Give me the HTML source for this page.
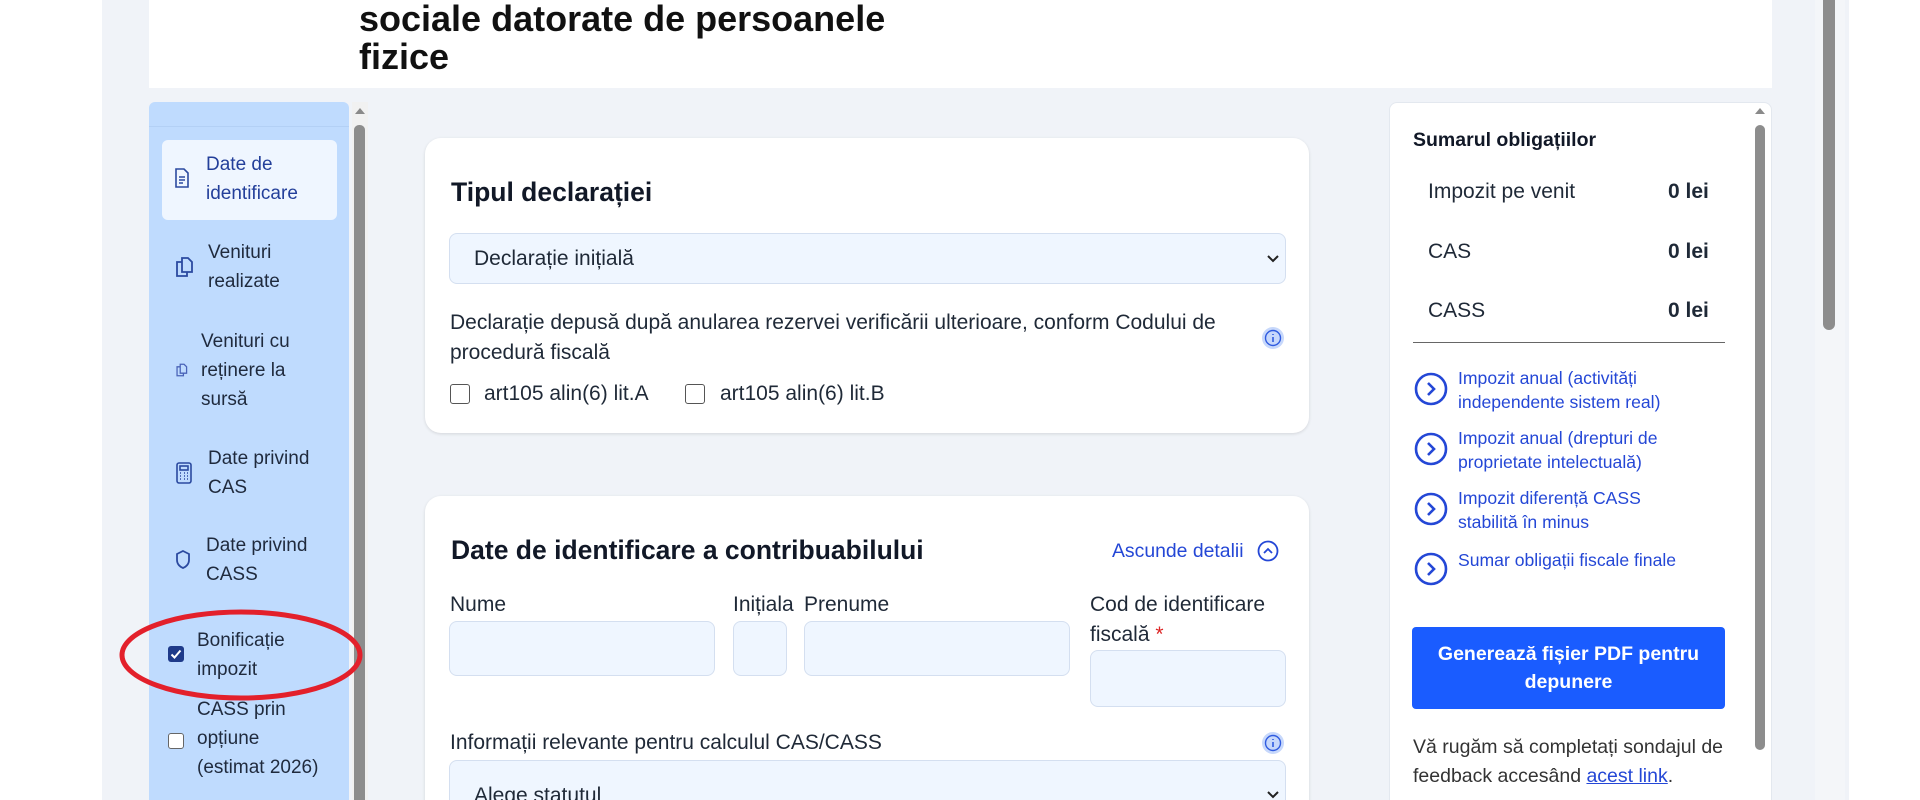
<!DOCTYPE html>
<html><head><meta charset="utf-8"><style>
*{box-sizing:border-box;margin:0;padding:0}
html,body{width:1920px;height:800px;overflow:hidden}
body{background:#fff;font-family:"Liberation Sans","DejaVu Sans",sans-serif;color:#1f2937}
#w{position:relative;width:1920px;height:800px;overflow:hidden}
.a{position:absolute}
.t{position:absolute;white-space:nowrap}
.side{font-size:19px;color:#1f2a3d;line-height:29px}
.m{font-size:21px;color:#1f2937}
.lnk{font-size:17.6px;color:#2447d6;line-height:24px}
.inp{position:absolute;background:#eff6ff;border:1px solid #d4dff0;border-radius:8px}
</style></head><body><div id="w">
<div class="a" style="left:102px;top:0;width:1747px;height:800px;background:#f0f3f8"></div>
<div class="a" style="left:149px;top:0;width:1623px;height:88px;background:#fff"></div>
<div class="t" style="left:359px;top:0px;font-size:36px;font-weight:bold;color:#111;line-height:38px">sociale datorate de persoanele<br>fizice</div>

<!-- sidebar -->
<div class="a" style="left:149px;top:102px;width:200px;height:700px;background:#bfdbfe;border-radius:6px 6px 0 0"></div>
<div class="a" style="left:149px;top:126px;width:200px;height:1px;background:#b3d0f5"></div>
<div class="a" style="left:162px;top:140px;width:175px;height:80px;background:#eff6ff;border-radius:6px"></div>
<div class="a" style="left:352px;top:102px;width:16px;height:700px;background:#f1f1f1"></div>
<div class="a" style="left:355px;top:108px;width:0;height:0;border-left:5px solid transparent;border-right:5px solid transparent;border-bottom:6px solid #8a8a8a"></div>
<div class="a" style="left:354px;top:125px;width:11px;height:680px;background:#8d8d8d;border-radius:5px"></div>

<svg class="a" style="left:174px;top:168px" width="16" height="20" viewBox="0 0 16 20" fill="none" stroke="#2b4aa0" stroke-width="1.6"><path d="M2 1h8l4 4v14H2z"/><path d="M5 9h6M5 12h6M5 15h4"/></svg>
<div class="t side" style="left:206px;top:150px;color:#233f9a">Date de<br>identificare</div>
<svg class="a" style="left:174px;top:256px" width="20" height="22" viewBox="0 0 20 22" fill="none" stroke="#2b4aa0" stroke-width="1.8"><path d="M8 2h6l4 4v10H8z"/><path d="M8 6H3v14h10v-4"/></svg>
<div class="t side" style="left:208px;top:238px">Venituri<br>realizate</div>
<svg class="a" style="left:175px;top:363px" width="13" height="14" viewBox="0 0 20 22" fill="none" stroke="#4a63b8" stroke-width="2"><path d="M8 2h6l4 4v10H8z"/><path d="M8 6H3v14h10v-4"/></svg>
<div class="t side" style="left:201px;top:327px">Venituri cu<br>reținere la<br>sursă</div>
<svg class="a" style="left:176px;top:462px" width="16" height="22" viewBox="0 0 16 22" fill="none" stroke="#2b4aa0" stroke-width="1.6"><rect x="1" y="1" width="14" height="20" rx="2"/><rect x="4" y="4" width="8" height="4"/><path d="M4 11h1M8 11h1M11 11h1M4 14h1M8 14h1M11 14h1M4 17h1M8 17h1M11 17h1"/></svg>
<div class="t side" style="left:208px;top:444px">Date privind<br>CAS</div>
<svg class="a" style="left:175px;top:550px" width="16" height="20" viewBox="0 0 16 20" fill="none" stroke="#2b4aa0" stroke-width="1.8"><path d="M8 1l6 3v6c0 4-3 7-6 8-3-1-6-4-6-8V4z"/></svg>
<div class="t side" style="left:206px;top:531px">Date privind<br>CASS</div>
<div class="a" style="left:168px;top:646px;width:16px;height:16px;background:#1e3a8a;border-radius:3px"></div>
<svg class="a" style="left:168px;top:646px" width="16" height="16" viewBox="0 0 16 16"><path d="M3.5 8.5l3 3 6-7" stroke="#fff" stroke-width="2" fill="none"/></svg>
<div class="t side" style="left:197px;top:626px">Bonificație<br>impozit</div>
<div class="a" style="left:168px;top:733px;width:16px;height:16px;background:#fff;border:1.5px solid #666;border-radius:3px"></div>
<div class="t side" style="left:197px;top:695px">CASS prin<br>opțiune<br>(estimat 2026)</div>
<svg class="a" style="left:118px;top:608px" width="246" height="94"><ellipse cx="123" cy="47" rx="119" ry="43" fill="none" stroke="#e3202b" stroke-width="5"/></svg>

<!-- card1 -->
<div class="a" style="left:425px;top:138px;width:884px;height:295px;background:#fff;border-radius:16px;box-shadow:0 1px 3px rgba(0,0,0,.12)"></div>
<div class="t" style="left:451px;top:177px;font-size:26.5px;font-weight:bold;color:#111827">Tipul declarației</div>
<div class="inp" style="left:449px;top:233px;width:837px;height:51px"></div>
<div class="t m" style="left:474px;top:247px">Declarație inițială</div>
<svg class="a" style="left:1266px;top:254px" width="14" height="10" viewBox="0 0 14 10"><path d="M2 2l5 5 5-5" stroke="#222" stroke-width="2" fill="none"/></svg>
<div class="t m" style="left:450px;top:308px;line-height:30px">Declarație depusă după anularea rezervei verificării ulterioare, conform Codului de<br>procedură fiscală</div>
<svg class="a" style="left:1261px;top:326px" width="24" height="24"><circle cx="12" cy="12" r="11" fill="#c7d8fb"/><circle cx="12" cy="12" r="7.5" fill="none" stroke="#2f5be0" stroke-width="1.4"/><path d="M12 11v5M12 8v1" stroke="#2f5be0" stroke-width="1.6"/></svg>
<div class="a" style="left:450px;top:384px;width:20px;height:20px;border:1.6px solid #555;border-radius:3px;background:#fff"></div>
<div class="t m" style="left:484px;top:382px">art105 alin(6) lit.A</div>
<div class="a" style="left:685px;top:384px;width:20px;height:20px;border:1.6px solid #555;border-radius:3px;background:#fff"></div>
<div class="t m" style="left:720px;top:382px">art105 alin(6) lit.B</div>

<!-- card2 -->
<div class="a" style="left:425px;top:496px;width:884px;height:320px;background:#fff;border-radius:16px 16px 0 0;box-shadow:0 1px 3px rgba(0,0,0,.12)"></div>
<div class="t" style="left:451px;top:535px;font-size:26.5px;font-weight:bold;color:#111827">Date de identificare a contribuabilului</div>
<div class="t" style="left:1112px;top:540px;font-size:19.4px;color:#2447d6">Ascunde detalii</div>
<svg class="a" style="left:1257px;top:540px" width="22" height="22"><circle cx="11" cy="11" r="9.5" fill="none" stroke="#2447d6" stroke-width="1.8"/><path d="M7 13l4-4 4 4" stroke="#2447d6" stroke-width="1.8" fill="none"/></svg>
<div class="t m" style="left:450px;top:593px">Nume</div>
<div class="t m" style="left:733px;top:593px">Inițiala</div>
<div class="t m" style="left:804px;top:593px">Prenume</div>
<div class="t m" style="left:1090px;top:590px;line-height:30px">Cod de identificare<br>fiscală <span style="color:#dc2626">*</span></div>
<div class="inp" style="left:449px;top:621px;width:266px;height:55px"></div>
<div class="inp" style="left:733px;top:621px;width:54px;height:55px"></div>
<div class="inp" style="left:804px;top:621px;width:266px;height:55px"></div>
<div class="inp" style="left:1090px;top:650px;width:196px;height:57px"></div>
<div class="t m" style="left:450px;top:731px">Informații relevante pentru calculul CAS/CASS</div>
<svg class="a" style="left:1261px;top:731px" width="24" height="24"><circle cx="12" cy="12" r="11" fill="#c7d8fb"/><circle cx="12" cy="12" r="7.5" fill="none" stroke="#2f5be0" stroke-width="1.4"/><path d="M12 11v5M12 8v1" stroke="#2f5be0" stroke-width="1.6"/></svg>
<div class="inp" style="left:449px;top:760px;width:837px;height:60px"></div>
<div class="t m" style="left:474px;top:784px">Alege statutul</div>
<svg class="a" style="left:1266px;top:790px" width="14" height="10" viewBox="0 0 14 10"><path d="M2 2l5 5 5-5" stroke="#222" stroke-width="2" fill="none"/></svg>

<!-- right panel -->
<div class="a" style="left:1389px;top:102px;width:383px;height:700px;background:#fff;border-radius:8px 8px 0 0;border:1px solid #e3e8ef"></div>
<div class="a" style="left:1755px;top:108px;width:0;height:0;border-left:5px solid transparent;border-right:5px solid transparent;border-bottom:6px solid #8a8a8a"></div>
<div class="a" style="left:1755px;top:125px;width:10px;height:625px;background:#8d8d8d;border-radius:5px"></div>
<div class="t" style="left:1413px;top:129px;font-size:19.5px;font-weight:bold;color:#111827">Sumarul obligațiilor</div>
<div class="t m" style="left:1428px;top:180px">Impozit pe venit</div>
<div class="t m" style="left:1668px;top:180px;font-weight:bold">0 lei</div>
<div class="t m" style="left:1428px;top:240px">CAS</div>
<div class="t m" style="left:1668px;top:240px;font-weight:bold">0 lei</div>
<div class="t m" style="left:1428px;top:299px">CASS</div>
<div class="t m" style="left:1668px;top:299px;font-weight:bold">0 lei</div>
<div class="a" style="left:1413px;top:342px;width:312px;height:1px;background:#666"></div>
<svg class="a" style="left:1414px;top:372px" width="34" height="34"><circle cx="17" cy="17" r="15" fill="none" stroke="#2447d6" stroke-width="2.6"/><path d="M14 11l6 6-6 6" stroke="#2447d6" stroke-width="2.6" fill="none"/></svg>
<div class="t lnk" style="left:1458px;top:366px">Impozit anual (activități<br>independente sistem real)</div>
<svg class="a" style="left:1414px;top:432px" width="34" height="34"><circle cx="17" cy="17" r="15" fill="none" stroke="#2447d6" stroke-width="2.6"/><path d="M14 11l6 6-6 6" stroke="#2447d6" stroke-width="2.6" fill="none"/></svg>
<div class="t lnk" style="left:1458px;top:426px">Impozit anual (drepturi de<br>proprietate intelectuală)</div>
<svg class="a" style="left:1414px;top:492px" width="34" height="34"><circle cx="17" cy="17" r="15" fill="none" stroke="#2447d6" stroke-width="2.6"/><path d="M14 11l6 6-6 6" stroke="#2447d6" stroke-width="2.6" fill="none"/></svg>
<div class="t lnk" style="left:1458px;top:486px">Impozit diferență CASS<br>stabilită în minus</div>
<svg class="a" style="left:1414px;top:552px" width="34" height="34"><circle cx="17" cy="17" r="15" fill="none" stroke="#2447d6" stroke-width="2.6"/><path d="M14 11l6 6-6 6" stroke="#2447d6" stroke-width="2.6" fill="none"/></svg>
<div class="t lnk" style="left:1458px;top:548px">Sumar obligații fiscale finale</div>
<div class="a" style="left:1412px;top:627px;width:313px;height:82px;background:#1a5cff;border-radius:4px;color:#fff;font-size:19.5px;font-weight:bold;text-align:center;line-height:28px;padding-top:13px">Generează fișier PDF pentru<br>depunere</div>
<div class="t" style="left:1413px;top:733px;font-size:19.5px;line-height:29px;color:#333">Vă rugăm să completați sondajul de<br>feedback accesând <span style="color:#2447d6;text-decoration:underline">acest link</span>.</div>

<!-- browser scrollbar -->
<div class="a" style="left:1815px;top:0;width:30px;height:800px;background:#f4f6f9"></div>
<div class="a" style="left:1823px;top:0;width:12px;height:330px;background:#8d8d8d;border-radius:0 0 6px 6px"></div>
</div></body></html>
